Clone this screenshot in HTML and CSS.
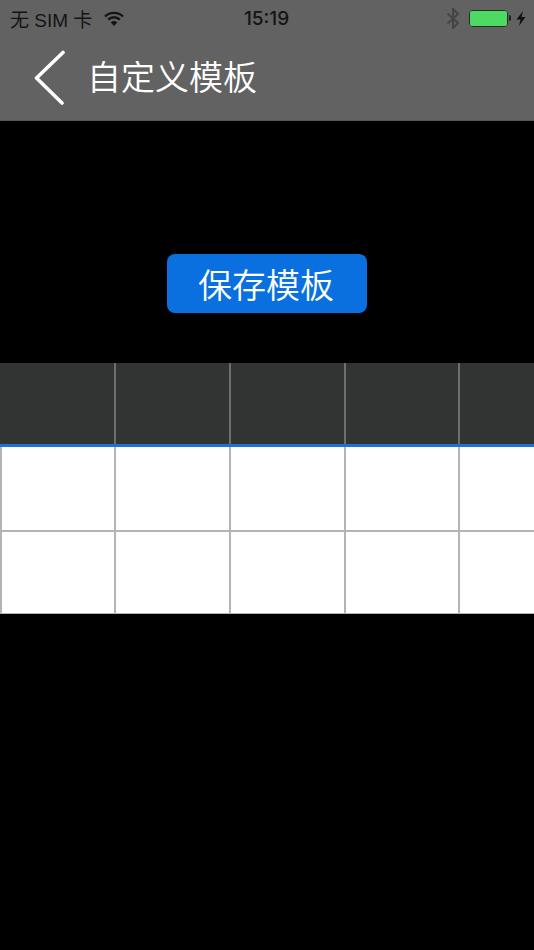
FILE: index.html
```html
<!DOCTYPE html>
<html lang="zh-CN">
<head>
    <meta charset="UTF-8">
    <meta name="viewport" content="width=device-width, initial-scale=1.0">
    <title>自定义模板</title>
    <link rel="stylesheet" href="styles.css">
</head>
<body>
    <div class="top-bar">
        <div class="status-bar">
            <div class="status-left">
                <span class="carrier">无 SIM 卡</span>
                <svg class="wifi" width="20" height="15" viewBox="0 0 20 15">
                    <path d="M1 5.5 A13 13 0 0 1 19 5.5" fill="none" stroke="#141414" stroke-width="2.4"/>
                    <path d="M4.2 8.6 A8.5 8.5 0 0 1 15.8 8.6" fill="none" stroke="#141414" stroke-width="2.4"/>
                    <path d="M6.8 11.4 A4.6 4.6 0 0 1 13.2 11.4 L10 15 Z" fill="#141414"/>
                </svg>
            </div>
            <div class="clock">15:19</div>
            <div class="status-right">
                <svg class="bluetooth" width="14" height="21" viewBox="0 0 14 21">
                    <path d="M1.5 5.5 L12 15 L7 20 L7 1 L12 6 L1.5 15.5" fill="none" stroke="#444" stroke-width="2"/>
                </svg>
                <div class="battery">
                    <div class="battery-level"></div>
                </div>
                <div class="battery-cap"></div>
                <svg class="bolt" width="10" height="15" viewBox="0 0 10 15">
                    <path d="M7 0 L0.5 8.5 L4.5 8.5 L3 15 L9.5 6 L5.5 6 Z" fill="#111"/>
                </svg>
            </div>
        </div>
        <div class="nav-bar">
            <svg class="back" width="34" height="56" viewBox="0 0 34 56">
                <path d="M30 2.5 L3.5 28 L29 53" fill="none" stroke="#fff" stroke-width="3.6" stroke-linecap="round" stroke-linejoin="round"/>
            </svg>
            <div class="nav-title">自定义模板</div>
        </div>
    </div>

    <div class="actions">
        <button class="btn-save">保存模板</button>
    </div>

    <div class="table">
        <div class="row row-head">
            <div class="cell"></div>
            <div class="cell"></div>
            <div class="cell"></div>
            <div class="cell"></div>
            <div class="cell"></div>
        </div>
        <div class="row row-body">
            <div class="cell"></div>
            <div class="cell"></div>
            <div class="cell"></div>
            <div class="cell"></div>
            <div class="cell"></div>
        </div>
        <div class="row row-body row-last">
            <div class="cell"></div>
            <div class="cell"></div>
            <div class="cell"></div>
            <div class="cell"></div>
            <div class="cell"></div>
        </div>
    </div>
</body>
</html>
```

FILE: styles.css
```css
* {
    margin: 0;
    padding: 0;
    box-sizing: border-box;
}

body {
    width: 534px;
    height: 950px;
    overflow: hidden;
    background: #000;
    font-family: "Liberation Sans", "Noto Sans CJK SC", sans-serif;
}

.top-bar {
    height: 121px;
    background: #626262;
    border-bottom: 1px solid #555;
}

.status-bar {
    height: 36px;
    padding: 0 8px 0 10px;
    display: grid;
    grid-template-columns: 1fr auto 1fr;
    align-items: center;
    color: #141414;
}

.status-left {
    display: flex;
    align-items: center;
    gap: 12px;
}

.carrier {
    font-size: 19px;
}

.clock {
    font-family: Inter, "Liberation Sans", sans-serif;
    font-size: 19px;
    font-weight: 500;
    margin-left: -3px;
}

.status-right {
    display: flex;
    align-items: center;
    justify-content: flex-end;
}

.bluetooth {
    margin-right: 9px;
}

.battery {
    width: 39px;
    height: 17px;
    border: 1.5px solid #24301f;
    border-radius: 4px;
}

.battery-level {
    height: 100%;
    background: #4cd964;
    border-radius: 2px;
}

.battery-cap {
    width: 2px;
    height: 6px;
    margin-left: 1px;
    background: #222;
    border-radius: 0 2px 2px 0;
}

.bolt {
    margin-left: 5px;
}

.nav-bar {
    height: 84px;
    padding: 0 0 6px 33px;
    display: flex;
    align-items: center;
}

.back {
    margin-top: 6px;
}

.nav-title {
    margin-left: 20px;
    font-size: 34px;
    font-weight: 350;
    color: #fff;
}

.actions {
    height: 242px;
    padding-top: 133px;
    display: flex;
    justify-content: center;
}

.btn-save {
    width: 200px;
    height: 59px;
    padding-right: 2px;
    border: none;
    border-radius: 8px;
    background: #0a70e0;
    color: #fff;
    font-family: inherit;
    font-size: 34px;
    font-weight: 350;
}

.row {
    display: grid;
    grid-template-columns: 114px 115px 115px 114px 76px;
}

.cell {
    border-left: 2px solid #b4b4b4;
}

.row-head {
    height: 81px;
    background: #323433;
}

.row-head .cell {
    border-left-color: #6e6e6e;
}

.row-head .cell:first-child {
    border-left-color: transparent;
}

.row-body {
    height: 86px;
    background: #fff;
    border-top: 3px solid #1f6fdc;
}

.row-last {
    height: 84px;
    border-top: 2px solid #b4b4b4;
    border-bottom: 1px solid #b4b4b4;
}
```
